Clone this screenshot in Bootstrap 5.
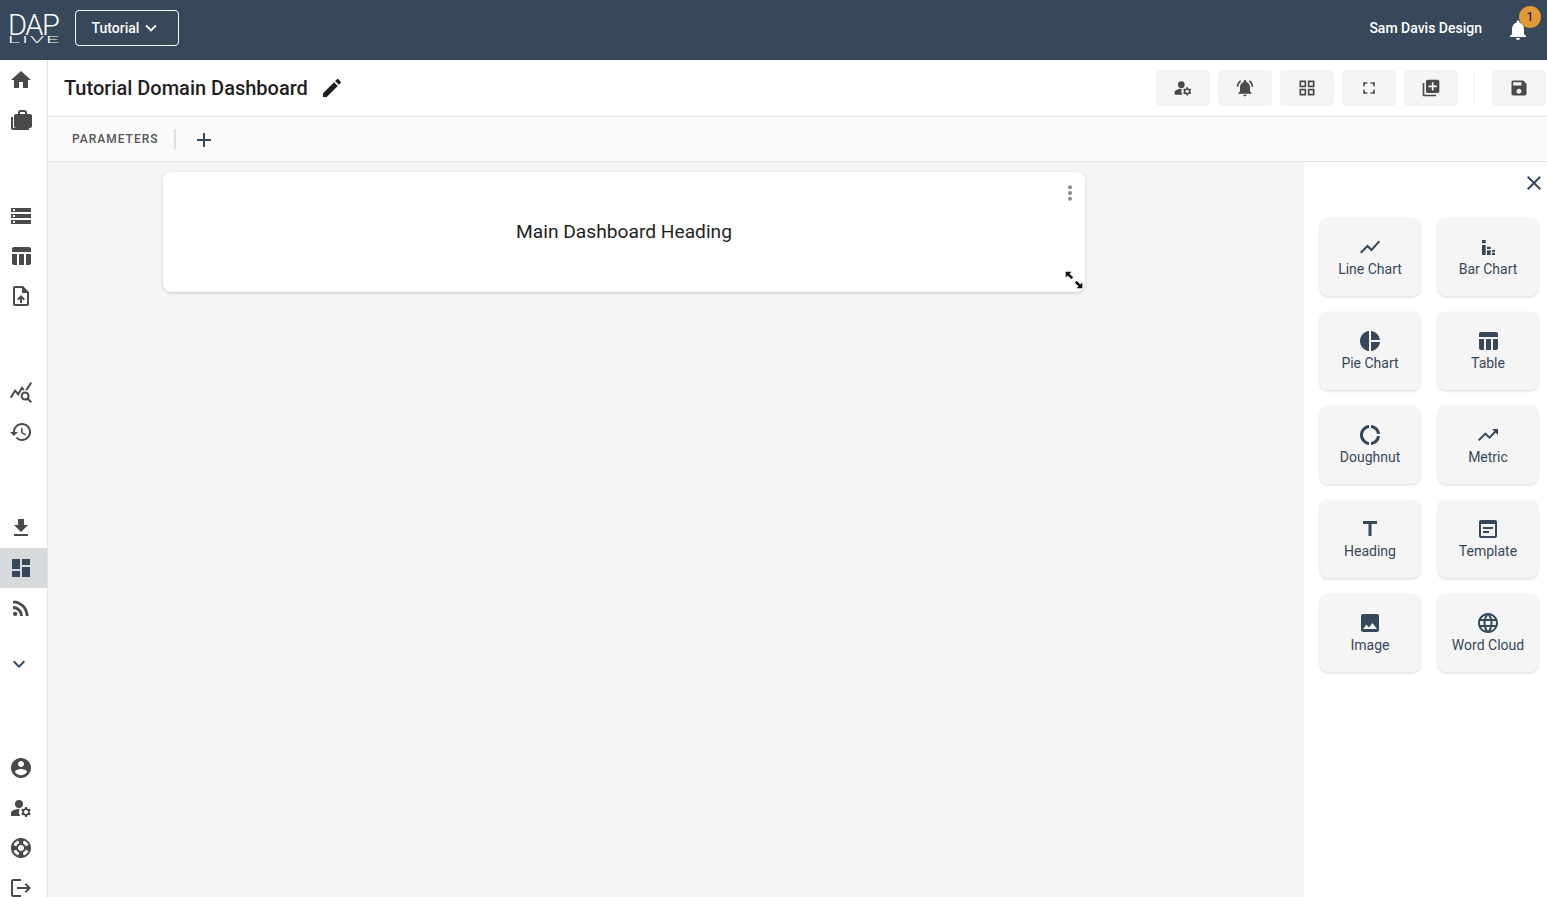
<!DOCTYPE html>
<html lang="en">
<head>
<meta charset="utf-8">
<title>Tutorial Domain Dashboard</title>
<link href="https://cdn.jsdelivr.net/npm/bootstrap@5.3.0/dist/css/bootstrap.min.css" rel="stylesheet">
<style>
html,body{height:100%;overflow:hidden}
body{font-family:Roboto,"Liberation Sans",sans-serif;background:#f5f5f5;color:#1f1f1f}
.ic{width:24px;height:24px;fill:currentColor;flex:none}
.topbar{height:60px;background:#36485a;color:#fff;padding:0 0 4px}
.brand{width:52px;margin-left:8px;color:#fff;line-height:1}
.brand-top{display:block;font-weight:300;font-size:29px;letter-spacing:-1.4px;line-height:26px;height:25px}
.brand-bot{display:block;font-weight:300;font-size:9.5px;letter-spacing:.8px;line-height:8px;height:8px;margin-top:-1px;transform:scaleX(2.4);transform-origin:left}
.domain-btn{width:104px;height:36px;margin-left:15px;border:1px solid #fff;border-radius:4px;color:#fff;font-size:14px;font-weight:500;padding:0;display:flex;align-items:center;justify-content:center;gap:1px}
.domain-btn:hover{color:#fff}
.domain-btn .ic{width:22px;height:22px}
.user-name{font-size:14px;font-weight:500;margin-right:24px}
.bell-wrap{width:24px;height:24px;margin-right:17px;margin-top:2px}
.bell-badge{top:-11px;left:13px;width:22px;height:22px;border-radius:50%;background:#e09a37;color:#222;font-size:12px;font-weight:500}
.shell{height:837px}
.sidenav{width:48px;background:#fff;border-right:1px solid #e4e4e4;color:#4a4a4a;flex:none;overflow:hidden}
.nav-cell{height:40px;display:flex;align-items:center;padding-left:9px;flex:none;color:#4a4a4a}
.nav-cell.is-on{background:#d6dadd;color:#36485a}
.nav-chev{height:40px;padding-left:7px;color:#36485a}
.grp2{margin-top:56px}.grp3{margin-top:56px}.grp4{margin-top:56px}.grp5{margin-top:16px}.grp6{margin-top:64px}
.workspace{min-width:0}
.titlebar{height:57px;background:#fff;border-bottom:1px solid #e4e4e4;padding-left:16px}
.page-title{font-size:20px;font-weight:500;color:#1f1f1f;margin:0;line-height:1}
.title-edit{margin-left:12px;color:#1f1f1f}
.tool-group{margin-right:1px}
.tool-btn{width:54px;height:36px;background:#f5f5f5;border:0;border-radius:4px;padding:0;color:#4a4a4a;display:flex;align-items:center;justify-content:center}
.tool-btn .ic{width:20px;height:20px}
.tool-sep{width:1px;height:32px;background:#eee;margin:0 9px 0 8px}
.paramsbar{height:45px;background:#fafafa;border-bottom:1px solid #e4e4e4;padding-left:24px}
.param-label{font-size:12px;font-weight:500;letter-spacing:1px;color:#555}
.param-sep{width:2px;height:20px;background:#ddd;margin:0 16px 0 15px}
.param-add{color:#36485a;margin-top:2px}
.canvas-area{min-height:0}
.canvas{padding:10px 219px 0 115px}
.widget{height:120px;background:#fff;border-radius:8px;box-shadow:0 1px 3px rgba(0,0,0,.18)}
.widget-text{font-size:19.2px;color:#1f1f1f;line-height:1;margin-top:-1px}
.widget-dots{top:11px;right:5px;width:20px;height:20px;fill:#8a8a8a}
.widget-resize{bottom:2px;right:1px;width:20px;height:20px;fill:#111}
.palette{width:243px;flex:none;background:#fff;position:relative;padding:56px 8px 0 16px}
.palette-close{top:8px;right:1px;color:#36485a;width:24px;height:24px;background:none;border:0;padding:0}
.tiles{display:grid;grid-template-columns:100px 100px;gap:16px 18px}
.tile{height:78px;background:#f5f5f5;border-radius:8px;box-shadow:0 1px 3px rgba(0,0,0,.16);color:#36485a;display:flex;flex-direction:column;align-items:center;padding-top:17px;font-size:14px;line-height:20px}
</style>
</head>
<body>
<svg class="d-none" xmlns="http://www.w3.org/2000/svg">
<symbol id="i-home" viewBox="0 0 24 24"><path d="M10 20v-6h4v6h5v-8h3L12 3 2 12h3v8z"/></symbol>
<symbol id="i-cases" viewBox="0 0 24 24"><path d="M4 9H2v11c0 1.1.9 2 2 2h16v-2H4V9z"/><path d="M18 6V4.5C18 3.1 16.900 2 15.500 2h-4C10.100 2 9 3.100 9 4.500V6H7C5.900 6 5 6.900 5 8v10c0 1.100.9 2 2 2h14c1.100 0 2-.9 2-2V8c0-1.100-.9-2-2-2h-3zM11 4.500c0-.3.2-.5.5-.5h4c.3 0 .5.2.5.5V6h-5V4.500z"/></symbol>
<symbol id="i-storage" viewBox="0 0 24 24"><path d="M2 20h20v-4H2v4zm2-3h2v2H4v-2zM2 4v4h20V4H2zm4 3H4V5h2v2zm-4 7h20v-4H2v4zm2-3h2v2H4v-2z"/></symbol>
<symbol id="i-table" viewBox="0 0 24 24"><path d="M10 10.020h5V21h-5zM17 21h3c1.100 0 2-.9 2-2v-9h-5v11zm3-18H5c-1.100 0-2 .9-2 2v3h19V5c0-1.100-.9-2-2-2zM3 19c0 1.100.9 2 2 2h3V10H3v9z"/></symbol>
<symbol id="i-upload" viewBox="0 0 24 24"><path d="M14 2H6c-1.100 0-1.990.9-1.990 2L4 20c0 1.100.89 2 1.990 2H18c1.100 0 2-.9 2-2V8l-6-6zm4 18H6V4h7v5h5v11zM8 15.010l1.410 1.410L11 14.840V19h2v-4.160l1.590 1.590L16 15.010 12.010 11 8 15.010z"/></symbol>
<symbol id="i-query" viewBox="0 0 24 24"><path d="M19.880 18.470c.44-.7.7-1.510.7-2.390 0-2.490-2.010-4.500-4.500-4.500s-4.500 2.010-4.500 4.500 2.010 4.500 4.490 4.500c.88 0 1.700-.26 2.390-.7L21.580 23 23 21.580l-3.120-3.110zm-3.800.11c-1.380 0-2.500-1.120-2.500-2.500s1.120-2.500 2.500-2.500 2.500 1.120 2.500 2.500-1.120 2.500-2.500 2.500zm-.36-8.500c-.74.02-1.450.18-2.100.45l-.55-.83-3.800 6.180-3.010-3.520-3.630 5.810L1 17l5-8 3 3.500L13 6l2.720 4.080zm2.590.5c-.64-.28-1.330-.45-2.050-.49L21.380 2 23 3.180l-4.690 7.400z"/></symbol>
<symbol id="i-history" viewBox="0 0 24 24"><path d="M13 3c-4.970 0-9 4.030-9 9H1l3.890 3.890.07.14L9 12H6c0-3.870 3.130-7 7-7s7 3.130 7 7-3.130 7-7 7c-1.930 0-3.680-.79-4.940-2.060l-1.420 1.420C8.270 19.990 10.510 21 13 21c4.970 0 9-4.030 9-9s-4.030-9-9-9zm-1 5v5l4.280 2.540.72-1.210-3.500-2.080V8H12z"/></symbol>
<symbol id="i-download" viewBox="0 0 24 24"><path d="M19 9h-4V3H9v6H5l7 7 7-7zM5 18v2h14v-2H5z"/></symbol>
<symbol id="i-dash" viewBox="0 0 24 24"><path d="M3 13h8V3H3v10zm0 8h8v-6H3v6zm10 0h8V11h-8v10zm0-18v6h8V3h-8z"/></symbol>
<symbol id="i-rss" viewBox="0 0 24 24"><circle cx="6.180" cy="17.820" r="2.180"/><path d="M4 4.440v2.830c7.030 0 12.730 5.700 12.730 12.730h2.830c0-8.590-6.970-15.560-15.560-15.560zm0 5.660v2.830c3.900 0 7.070 3.170 7.070 7.070h2.830c0-5.470-4.430-9.900-9.900-9.900z"/></symbol>
<symbol id="i-chev" viewBox="0 0 24 24"><path d="M16.590 8.590L12 13.170 7.410 8.590 6 10l6 6 6-6z"/></symbol>
<symbol id="i-account" viewBox="0 0 24 24"><path d="M12 2C6.480 2 2 6.480 2 12s4.480 10 10 10 10-4.480 10-10S17.520 2 12 2zm0 3c1.660 0 3 1.340 3 3s-1.340 3-3 3-3-1.340-3-3 1.340-3 3-3zm0 14.200c-2.500 0-4.710-1.280-6-3.220.03-1.990 4-3.080 6-3.080 1.990 0 5.970 1.090 6 3.080-1.290 1.940-3.500 3.220-6 3.220z"/></symbol>
<symbol id="i-manage" viewBox="0 0 24 24"><circle cx="10" cy="8" r="4"/><path d="M10.670 13.020c-.22-.01-.44-.02-.67-.02-2.420 0-4.680.67-6.610 1.820-.88.52-1.390 1.500-1.390 2.530V20h9.260c-.79-1.130-1.260-2.510-1.260-4 0-1.070.25-2.070.67-2.980z"/><path d="M20.750 16c0-.22-.03-.42-.06-.63l1.140-1.010-1-1.730-1.450.49c-.32-.27-.68-.48-1.080-.63L18 11h-2l-.3 1.490c-.4.15-.76.36-1.080.63l-1.450-.49-1 1.730 1.140 1.010c-.03.21-.06.41-.06.63s.03.42.06.63l-1.140 1.010 1 1.730 1.450-.49c.32.27.68.48 1.080.63L16 21h2l.3-1.490c.4-.15.76-.36 1.080-.63l1.450.49 1-1.730-1.140-1.010c.03-.21.06-.41.06-.63zM17 18c-1.100 0-2-.9-2-2s.9-2 2-2 2 .9 2 2-.9 2-2 2z"/></symbol>
<symbol id="i-support" viewBox="0 0 24 24"><path d="M12 2C6.480 2 2 6.480 2 12s4.480 10 10 10 10-4.480 10-10S17.520 2 12 2zm7.460 7.120l-2.780 1.150c-.51-1.360-1.580-2.440-2.950-2.940l1.150-2.780c2.100.8 3.770 2.470 4.580 4.570zM12 15c-1.660 0-3-1.340-3-3s1.340-3 3-3 3 1.340 3 3-1.340 3-3 3zM9.130 4.540l1.170 2.780c-1.380.5-2.470 1.590-2.980 2.970L4.540 9.130c.81-2.110 2.480-3.780 4.590-4.590zM4.540 14.870l2.780-1.150c.51 1.380 1.590 2.460 2.970 2.960l-1.170 2.780c-2.100-.81-3.770-2.480-4.580-4.590zm10.340 4.590l-1.150-2.780c1.370-.51 2.450-1.590 2.950-2.970l2.780 1.170c-.81 2.100-2.480 3.770-4.580 4.580z"/></symbol>
<symbol id="i-logout" viewBox="0 0 24 24"><path d="M17 7l-1.410 1.410L18.170 11H8v2h10.170l-2.580 2.580L17 17l5-5zM4 5h8V3H4c-1.100 0-2 .9-2 2v14c0 1.100.9 2 2 2h8v-2H4V5z"/></symbol>
<symbol id="i-edit" viewBox="0 0 24 24"><path d="M3 17.250V21h3.750L17.810 9.940l-3.750-3.750L3 17.250zM20.710 7.040c.39-.39.39-1.020 0-1.410l-2.340-2.340c-.39-.39-1.020-.39-1.410 0l-1.830 1.830 3.750 3.750 1.830-1.830z"/></symbol>
<symbol id="i-bell" viewBox="0 0 24 24"><path d="M12 22c1.100 0 2-.9 2-2h-4c0 1.100.89 2 2 2zm6-6v-5c0-3.070-1.640-5.640-4.500-6.320V4c0-.83-.67-1.500-1.500-1.500s-1.500.67-1.500 1.500v.68C7.630 5.360 6 7.920 6 11v5l-2 2v1h16v-1l-2-2z"/></symbol>
<symbol id="i-bell-on" viewBox="0 0 24 24"><path d="M7.580 4.080L6.150 2.650C3.750 4.480 2.170 7.300 2.030 10.500h2c.15-2.650 1.510-4.970 3.550-6.420zm12.390 6.420h2c-.15-3.200-1.730-6.020-4.120-7.850l-1.420 1.430c2.020 1.450 3.390 3.770 3.540 6.420zM18 11c0-3.070-1.640-5.640-4.500-6.320V4c0-.83-.67-1.500-1.500-1.500s-1.500.67-1.500 1.500v.68C7.630 5.360 6 7.920 6 11v5l-2 2v1h16v-1l-2-2v-5zm-6 11c.14 0 .27-.01.4-.04.65-.14 1.180-.58 1.440-1.180.1-.24.15-.5.15-.78h-4c.01 1.100.9 2 2.010 2z"/></symbol>
<symbol id="i-grid" viewBox="0 0 24 24"><path d="M3 3v8h8V3H3zm6 6H5V5h4v4zm-6 4v8h8v-8H3zm6 6H5v-4h4v4zm4-16v8h8V3h-8zm6 6h-4V5h4v4zm-6 4v8h8v-8h-8zm6 6h-4v-4h4v4z"/></symbol>
<symbol id="i-full" viewBox="0 0 24 24"><path d="M7 14H5v5h5v-2H7v-3zm-2-4h2V7h3V5H5v5zm12 7h-3v2h5v-5h-2v3zM14 5v2h3v3h2V5h-5z"/></symbol>
<symbol id="i-libadd" viewBox="0 0 24 24"><path d="M4 6H2v14c0 1.100.9 2 2 2h14v-2H4V6zm16-4H8c-1.100 0-2 .9-2 2v12c0 1.100.9 2 2 2h12c1.100 0 2-.9 2-2V4c0-1.100-.9-2-2-2zm-1 9h-4v4h-2v-4H9V9h4V5h2v4h4v2z"/></symbol>
<symbol id="i-save" viewBox="0 0 24 24"><path d="M17 3H5c-1.110 0-2 .9-2 2v14c0 1.100.89 2 2 2h14c1.100 0 2-.9 2-2V7l-4-4zm-5 16c-1.660 0-3-1.340-3-3s1.340-3 3-3 3 1.340 3 3-1.340 3-3 3zm3-10H5V5h10v4z"/></symbol>
<symbol id="i-add" viewBox="0 0 24 24"><path d="M19 13h-6v6h-2v-6H5v-2h6V5h2v6h6v2z"/></symbol>
<symbol id="i-close" viewBox="0 0 24 24"><path d="M19 6.410L17.590 5 12 10.590 6.410 5 5 6.410 10.590 12 5 17.590 6.410 19 12 13.410 17.590 19 19 17.590 13.410 12z"/></symbol>
<symbol id="i-line" viewBox="0 0 24 24"><path d="M3.500 18.490l6-6.010 4 4L22 6.920l-1.410-1.410-7.090 7.970-4-4L2 16.990z"/></symbol>
<symbol id="i-bar" viewBox="0 0 24 24"><path d="M6 5h3.700v3.300H6zM6 10h3.700v10H6zM11 11.700h3.700V14H11zM11 15.300h3.700V20H11zM16 15h3v1.700h-3zM16 17.700h3V20h-3z"/></symbol>
<symbol id="i-pie" viewBox="0 0 24 24"><path d="M11 2v20c-5.070-.5-9-4.790-9-10s3.930-9.500 9-10zm2.030 0v8.990H22c-.47-4.740-4.240-8.520-8.970-8.990zm0 11.010V22c4.740-.47 8.500-4.250 8.970-8.990h-8.970z"/></symbol>
<symbol id="i-donut" viewBox="0 0 24 24"><path d="M11 5.080V2c-5 .5-9 4.810-9 10s4 9.500 9 10v-3.080c-3-.48-6-3.400-6-6.920s3-6.440 6-6.920zM18.970 11H22c-.47-5-4-8.530-9-9v3.080C16 5.510 18.540 8 18.970 11zM13 18.920V22c5-.47 8.530-4 9-9h-3.030c-.43 3-2.970 5.490-5.970 5.920z"/></symbol>
<symbol id="i-trend" viewBox="0 0 24 24"><path d="M16 6l2.290 2.290-4.880 4.880-4-4L2 16.590 3.410 18l6-6 4 4 6.300-6.290L22 12V6z"/></symbol>
<symbol id="i-title" viewBox="0 0 24 24"><path d="M5 4v3h5.500v12h3V7H19V4z"/></symbol>
<symbol id="i-template" viewBox="0 0 24 24"><path d="M19 3H5c-1.100 0-2 .9-2 2v14c0 1.100.9 2 2 2h14c1.100 0 2-.9 2-2V5c0-1.100-.9-2-2-2zm0 16H5V7h14v12zm-2-7H7v-2h10v2zm-4 4H7v-2h6v2z"/></symbol>
<symbol id="i-image" viewBox="0 0 24 24"><path d="M21 19V5c0-1.100-.9-2-2-2H5c-1.100 0-2 .9-2 2v14c0 1.100.9 2 2 2h14c1.100 0 2-.9 2-2zM8.500 13.500l2.500 3.010L14.500 12l4.500 6H5l3.500-4.500z"/></symbol>
<symbol id="i-globe" viewBox="0 0 24 24"><path d="M11.990 2C6.470 2 2 6.480 2 12s4.470 10 9.990 10C17.520 22 22 17.520 22 12S17.520 2 11.990 2zm6.930 6h-2.950c-.32-1.250-.78-2.450-1.380-3.560 1.840.63 3.370 1.910 4.330 3.560zM12 4.040c.83 1.200 1.480 2.530 1.910 3.960h-3.820c.43-1.430 1.080-2.760 1.910-3.960zM4.260 14C4.100 13.360 4 12.690 4 12s.1-1.360.26-2h3.380c-.08.66-.14 1.320-.14 2 0 .68.06 1.340.14 2H4.260zm.82 2h2.950c.32 1.250.78 2.450 1.380 3.560-1.840-.63-3.370-1.900-4.330-3.560zm2.950-8H5.080c.96-1.660 2.490-2.930 4.330-3.560C8.810 5.550 8.350 6.750 8.030 8zM12 19.960c-.83-1.200-1.480-2.530-1.910-3.960h3.820c-.43 1.430-1.080 2.760-1.910 3.960zM14.340 14H9.660c-.09-.66-.16-1.320-.16-2 0-.68.07-1.350.16-2h4.680c.09.65.16 1.320.16 2 0 .68-.07 1.340-.16 2zm.25 5.560c.6-1.110 1.060-2.310 1.380-3.560h2.950c-.96 1.650-2.490 2.930-4.330 3.560zM16.360 14c.08-.66.14-1.320.14-2 0-.68-.06-1.340-.14-2h3.380c.16.64.26 1.310.26 2s-.1 1.360-.26 2h-3.380z"/></symbol>
<symbol id="i-dots" viewBox="0 0 24 24"><circle cx="12" cy="5" r="2.400"/><circle cx="12" cy="12" r="2.400"/><circle cx="12" cy="19" r="2.400"/></symbol>
<symbol id="i-resize" viewBox="0 0 24 24"><path d="M2 2h7L6.600 4.400 11 8.800 8.800 11 4.400 6.600 2 9zM22 22h-7l2.400-2.400-4.400-4.400 2.200-2.200 4.400 4.400L22 15z"/></symbol>
</svg>

<nav class="navbar topbar flex-nowrap justify-content-start">
  <div class="brand"><span class="brand-top">DAP</span><span class="brand-bot">LIVE</span></div>
  <button class="btn domain-btn" type="button">Tutorial <svg class="ic"><use href="#i-chev"/></svg></button>
  <div class="ms-auto d-flex align-items-center">
    <span class="user-name">Sam Davis Design</span>
    <div class="bell-wrap position-relative">
      <svg class="ic"><use href="#i-bell"/></svg>
      <span class="bell-badge position-absolute d-flex align-items-center justify-content-center">1</span>
    </div>
  </div>
</nav>

<div class="shell d-flex">
  <aside class="sidenav d-flex flex-column">
    <a class="nav-cell"><svg class="ic"><use href="#i-home"/></svg></a>
    <a class="nav-cell"><svg class="ic"><use href="#i-cases"/></svg></a>
    <a class="nav-cell grp2"><svg class="ic"><use href="#i-storage"/></svg></a>
    <a class="nav-cell"><svg class="ic"><use href="#i-table"/></svg></a>
    <a class="nav-cell"><svg class="ic"><use href="#i-upload"/></svg></a>
    <a class="nav-cell grp3"><svg class="ic"><use href="#i-query"/></svg></a>
    <a class="nav-cell"><svg class="ic"><use href="#i-history"/></svg></a>
    <a class="nav-cell grp4"><svg class="ic"><use href="#i-download"/></svg></a>
    <a class="nav-cell is-on"><svg class="ic"><use href="#i-dash"/></svg></a>
    <a class="nav-cell"><svg class="ic"><use href="#i-rss"/></svg></a>
    <a class="nav-cell nav-chev grp5"><svg class="ic"><use href="#i-chev"/></svg></a>
    <a class="nav-cell grp6"><svg class="ic"><use href="#i-account"/></svg></a>
    <a class="nav-cell"><svg class="ic"><use href="#i-manage"/></svg></a>
    <a class="nav-cell"><svg class="ic"><use href="#i-support"/></svg></a>
    <a class="nav-cell"><svg class="ic"><use href="#i-logout"/></svg></a>
  </aside>

  <main class="workspace flex-grow-1 d-flex flex-column">
    <header class="titlebar d-flex align-items-center">
      <h1 class="page-title">Tutorial Domain Dashboard</h1>
      <svg class="ic title-edit"><use href="#i-edit"/></svg>
      <div class="tool-group ms-auto d-flex align-items-center gap-2">
        <button class="tool-btn" type="button"><svg class="ic"><use href="#i-manage"/></svg></button>
        <button class="tool-btn" type="button"><svg class="ic"><use href="#i-bell-on"/></svg></button>
        <button class="tool-btn" type="button"><svg class="ic"><use href="#i-grid"/></svg></button>
        <button class="tool-btn" type="button"><svg class="ic"><use href="#i-full"/></svg></button>
        <button class="tool-btn" type="button"><svg class="ic"><use href="#i-libadd"/></svg></button>
        <span class="tool-sep"></span>
        <button class="tool-btn" type="button"><svg class="ic"><use href="#i-save"/></svg></button>
      </div>
    </header>
    <div class="paramsbar d-flex align-items-center">
      <span class="param-label">PARAMETERS</span>
      <span class="param-sep"></span>
      <svg class="ic param-add"><use href="#i-add"/></svg>
    </div>
    <div class="canvas-area flex-grow-1 d-flex">
      <div class="canvas flex-grow-1">
        <div class="widget position-relative d-flex align-items-center justify-content-center">
          <span class="widget-text">Main Dashboard Heading</span>
          <svg class="widget-dots position-absolute"><use href="#i-dots"/></svg>
          <svg class="widget-resize position-absolute"><use href="#i-resize"/></svg>
        </div>
      </div>
      <aside class="palette">
        <button class="palette-close position-absolute" type="button" aria-label="Close"><svg class="ic"><use href="#i-close"/></svg></button>
        <div class="tiles">
          <div class="tile"><svg class="ic"><use href="#i-line"/></svg><span>Line Chart</span></div>
          <div class="tile"><svg class="ic"><use href="#i-bar"/></svg><span>Bar Chart</span></div>
          <div class="tile"><svg class="ic"><use href="#i-pie"/></svg><span>Pie Chart</span></div>
          <div class="tile"><svg class="ic"><use href="#i-table"/></svg><span>Table</span></div>
          <div class="tile"><svg class="ic"><use href="#i-donut"/></svg><span>Doughnut</span></div>
          <div class="tile"><svg class="ic"><use href="#i-trend"/></svg><span>Metric</span></div>
          <div class="tile"><svg class="ic"><use href="#i-title"/></svg><span>Heading</span></div>
          <div class="tile"><svg class="ic"><use href="#i-template"/></svg><span>Template</span></div>
          <div class="tile"><svg class="ic"><use href="#i-image"/></svg><span>Image</span></div>
          <div class="tile"><svg class="ic"><use href="#i-globe"/></svg><span>Word Cloud</span></div>
        </div>
      </aside>
    </div>
  </main>
</div>
<script src="https://cdn.jsdelivr.net/npm/bootstrap@5.3.0/dist/js/bootstrap.bundle.min.js"></script>
</body>
</html>
